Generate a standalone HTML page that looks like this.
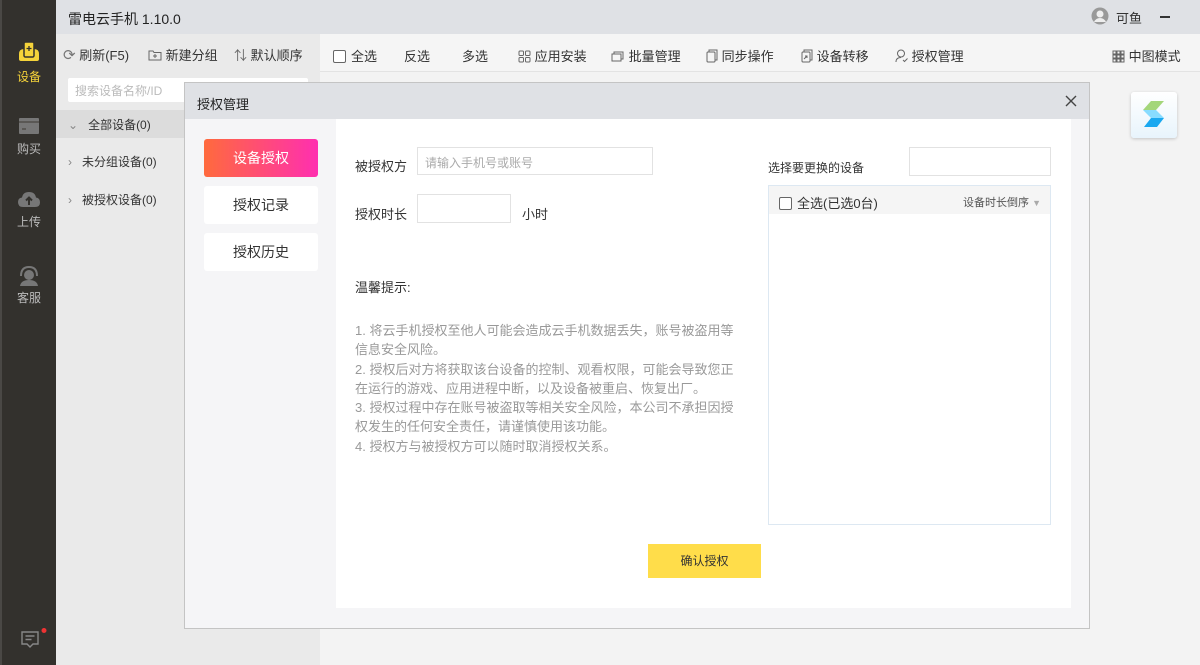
<!DOCTYPE html>
<html><head><meta charset="utf-8"><style>
*{margin:0;padding:0;box-sizing:border-box}
body{width:1200px;height:665px;overflow:hidden;position:relative;font-family:"Liberation Sans","Noto Sans CJK SC",sans-serif;background:#f3f3f3;color:#333}
.abs{position:absolute}
.side{left:0;top:0;width:56px;height:665px;background:#33312d;border-left:2px solid #4a4845}
.si{position:absolute;left:0;width:54px;text-align:center;font-size:12px;color:#bbb}
.title{left:56px;top:0;width:1144px;height:34px;background:#dfe1e5}
.lp{left:56px;top:34px;width:264px;height:631px;background:#eaeaea}
.tb{left:320px;top:34px;width:880px;height:38px;background:#f5f5f5;border-bottom:1px solid #e3e3e3}
.t{position:absolute;font-size:13px;white-space:nowrap}
.cb{display:inline-block;width:13px;height:13px;border:1px solid #666;background:#fff;border-radius:2px;vertical-align:-2px;margin-right:5px}
.modal{left:184px;top:82px;width:906px;height:547px;background:#f5f5f7;border:1px solid #c4c4c4}
.mh{left:0;top:0;width:904px;height:36px;background:#dfe1e5}
.nav{position:absolute;left:19px;width:114px;height:38px;border-radius:3px;background:#fff;text-align:center;line-height:38px;font-size:14px;color:#333}
.content{left:151px;top:36px;width:735px;height:489px;background:#fff}
.box{position:absolute;background:#fff;border:1px solid #e2e2e2}
</style></head><body>
<div class="abs side">
 <div class="si" style="top:40px;color:#f5d33a">
  <svg width="26" height="24" viewBox="0 0 26 24"><path d="M3 14 Q3 9 8 9 L18 9 Q23 9 23 14 L23 19 Q23 21 21 21 L5 21 Q3 21 3 19Z" fill="#f5d33a"/><rect x="8" y="2" width="10" height="15" rx="1.5" fill="#f5d33a" stroke="#33312d" stroke-width="1.5"/><path d="M13 6v5M10.5 8.5h5" stroke="#33312d" stroke-width="1.3"/></svg>
  <div style="margin-top:1px">设备</div></div>
 <div class="si" style="top:117px"><svg width="22" height="18" viewBox="0 0 22 18"><rect x="1" y="1" width="20" height="16" rx="1" fill="#777"/><rect x="1" y="4" width="20" height="2" fill="#5a5855"/><rect x="4" y="11" width="4" height="2" fill="#5a5855"/></svg><div style="margin-top:2px">购买</div></div>
 <div class="si" style="top:190px"><svg width="24" height="18" viewBox="0 0 24 18"><path d="M6 17 Q1 17 1 12 Q1 8 5 7.5 Q6 2 12 2 Q18 2 19 7.5 Q23 8 23 12.5 Q23 17 18 17Z" fill="#777"/><path d="M12 15V8M9 10.5l3-3 3 3" stroke="#33312d" stroke-width="2" fill="none"/></svg><div style="margin-top:2px">上传</div></div>
 <div class="si" style="top:264px"><svg width="24" height="22" viewBox="0 0 24 22"><path d="M4 12 Q4 3 12 3 Q20 3 20 12" stroke="#777" stroke-width="2" fill="none"/><circle cx="12" cy="11" r="5" fill="#777"/><path d="M3 22 Q4 16 12 16 Q20 16 21 22Z" fill="#777"/></svg><div>客服</div></div>
 <svg class="abs" style="left:18px;top:628px" width="30" height="26" viewBox="0 0 30 26"><path d="M2 4h16v12h-5l-3 3-3-3H2Z" stroke="#888" stroke-width="1.4" fill="none"/><path d="M5.5 8h9M5.5 11.5h6" stroke="#888" stroke-width="1.4"/><circle cx="24" cy="2.5" r="2.5" fill="#e33"/></svg>
</div>
<div class="abs title"><div class="t" style="left:12px;top:9px;font-size:14px;color:#222">雷电云手机 1.10.0</div>
 <svg class="abs" style="left:1035px;top:7px" width="18" height="18" viewBox="0 0 18 18"><circle cx="9" cy="9" r="8.5" fill="#999"/><circle cx="9" cy="7" r="3.5" fill="#eee"/><path d="M3 15 Q5 11 9 11 Q13 11 15 15" fill="#eee"/></svg>
 <div class="t" style="left:1060px;top:8px">可鱼</div>
 <div class="abs" style="left:1104px;top:16px;width:10px;height:1.5px;background:#333"></div>
</div>
<div class="abs lp">
 <div class="t" style="left:7px;top:11px"><span style="color:#777;font-size:15px">⟳</span>&nbsp;刷新(F5)</div>
 <div class="t" style="left:92px;top:11px"><svg width="14" height="12" viewBox="0 0 14 12" style="vertical-align:-1px"><path d="M1 2h4l1 1.5h7V11H1Z" stroke="#666" fill="none"/><path d="M7 5v4M5 7h4" stroke="#666"/></svg>&nbsp;新建分组</div>
 <div class="t" style="left:178px;top:11px"><span style="color:#666">⇅</span>&nbsp;默认顺序</div>
 <div class="abs" style="left:12px;top:44px;width:240px;height:24px;background:#fff;border-radius:2px"><div class="t" style="left:7px;top:4px;font-size:12px;color:#bbb">搜索设备名称/ID</div></div>
 <div class="abs" style="left:0;top:76px;width:264px;height:28px;background:#dcdcdc"></div>
 <div class="t" style="left:12px;top:82px;font-size:12px"><span style="color:#888">⌄</span>&nbsp;&nbsp; 全部设备(0)</div>
 <div class="t" style="left:12px;top:119px;font-size:12px"><span style="color:#888">›</span>&nbsp;&nbsp; 未分组设备(0)</div>
 <div class="t" style="left:12px;top:157px;font-size:12px"><span style="color:#888">›</span>&nbsp;&nbsp; 被授权设备(0)</div>
</div>
<div class="abs tb">
 <div class="t" style="left:13px;top:12px"><span class="cb"></span>全选</div>
 <div class="t" style="left:84px;top:12px">反选</div>
 <div class="t" style="left:142px;top:12px">多选</div>
 <div class="t" style="left:198px;top:12px"><svg width="13" height="13" viewBox="0 0 13 13" style="vertical-align:-2px"><g fill="none" stroke="#666"><rect x="1" y="1" width="4.5" height="4.5" rx="1"/><rect x="7.5" y="1" width="4.5" height="4.5" rx="1"/><rect x="1" y="7.5" width="4.5" height="4.5" rx="1"/><rect x="7.5" y="7.5" width="4.5" height="4.5" rx="1"/></g></svg> 应用安装</div>
 <div class="t" style="left:291px;top:12px"><svg width="14" height="12" viewBox="0 0 14 12" style="vertical-align:-1px"><g fill="none" stroke="#666"><rect x="1" y="4" width="9" height="7"/><path d="M3 4V2h9v7h-2"/></g></svg> 批量管理</div>
 <div class="t" style="left:386px;top:12px"><svg width="12" height="14" viewBox="0 0 12 14" style="vertical-align:-2px"><g fill="none" stroke="#666"><rect x="1" y="3" width="8" height="10" rx="1"/><path d="M3 3V1h8v10H9"/></g></svg> 同步操作</div>
 <div class="t" style="left:481px;top:12px"><svg width="12" height="14" viewBox="0 0 12 14" style="vertical-align:-2px"><g fill="none" stroke="#666"><rect x="1" y="3" width="8" height="10" rx="1"/><path d="M3 3V1h8v10H9M3 10l3-3M4 7h2v2"/></g></svg> 设备转移</div>
 <div class="t" style="left:575px;top:12px"><svg width="13" height="14" viewBox="0 0 13 14" style="vertical-align:-2px"><g fill="none" stroke="#666"><circle cx="6" cy="4.5" r="3.5"/><path d="M1 13 Q1 8.5 6 8.5M8 11l1.5 1.5 3-3"/></g></svg> 授权管理</div>
 <div class="t" style="left:792px;top:12px"><svg width="13" height="13" viewBox="0 0 13 13" style="vertical-align:-2px"><g fill="none" stroke="#666"><rect x="1" y="1" width="3" height="3"/><rect x="5" y="1" width="3" height="3"/><rect x="9" y="1" width="3" height="3"/><rect x="1" y="5" width="3" height="3"/><rect x="5" y="5" width="3" height="3"/><rect x="9" y="5" width="3" height="3"/><rect x="1" y="9" width="3" height="3"/><rect x="5" y="9" width="3" height="3"/><rect x="9" y="9" width="3" height="3"/></g></svg> 中图模式</div>
</div>
<div class="abs" style="left:1131px;top:92px;width:46px;height:46px;background:linear-gradient(#fff,#e8f4fc);border-radius:3px;box-shadow:0 1px 3px rgba(0,0,0,.2)">
 <svg width="46" height="46" viewBox="0 0 46 46"><path d="M12 18 L20 9 H33 L25 18Z" fill="#a3d67a"/><path d="M12 18 H25 L33 26 H20Z" fill="#88dcff"/><path d="M20 26 H33 L26 35 H13Z" fill="#1aa8f0"/></svg>
</div>
<div class="abs modal">
 <div class="abs mh"><div class="t" style="left:12px;top:11px;color:#222">授权管理</div>
  <svg class="abs" style="left:880px;top:12px" width="12" height="12" viewBox="0 0 12 12"><path d="M1 1l10 10M11 1L1 11" stroke="#444" stroke-width="1.4"/></svg></div>
 <div class="nav" style="top:56px;background:linear-gradient(90deg,#ff6a3d,#ff2fb0);color:#fff">设备授权</div>
 <div class="nav" style="top:103px">授权记录</div>
 <div class="nav" style="top:150px">授权历史</div>
 <div class="abs content">
  <div class="t" style="left:19px;top:37px">被授权方</div>
  <div class="box" style="left:81px;top:28px;width:236px;height:28px"><div class="t" style="left:7px;top:6px;font-size:12px;color:#aaa">请输入手机号或账号</div></div>
  <div class="t" style="left:19px;top:85px">授权时长</div>
  <div class="box" style="left:81px;top:75px;width:94px;height:29px"></div>
  <div class="t" style="left:186px;top:85px">小时</div>
  <div class="t" style="left:19px;top:158px;font-size:13px">温馨提示:</div>
  <div class="abs" style="left:19px;top:202px;width:389px;font-size:13px;line-height:19.3px;color:#999">1. 将云手机授权至他人可能会造成云手机数据丢失，账号被盗用等信息安全风险。<br>2. 授权后对方将获取该台设备的控制、观看权限，可能会导致您正在运行的游戏、应用进程中断，以及设备被重启、恢复出厂。<br>3. 授权过程中存在账号被盗取等相关安全风险，本公司不承担因授权发生的任何安全责任，请谨慎使用该功能。<br>4. 授权方与被授权方可以随时取消授权关系。</div>
  <div class="t" style="left:432px;top:40px;font-size:12px">选择要更换的设备</div>
  <div class="box" style="left:573px;top:28px;width:142px;height:29px"></div>
  <div class="abs" style="left:432px;top:66px;width:283px;height:340px;border:1px solid #dde8f2;background:#fff">
   <div class="abs" style="left:0;top:0;width:281px;height:28px;background:#f5f5f5"></div>
   <div class="t" style="left:10px;top:7px"><span class="cb"></span>全选(已选0台)</div>
   <div class="t" style="left:194px;top:8px;font-size:11px;color:#555">设备时长倒序 <span style="color:#aaa;font-size:9px">▼</span></div>
  </div>
  <div class="abs" style="left:312px;top:425px;width:113px;height:34px;background:#ffdd4a;text-align:center;line-height:34px;font-size:12px;color:#333">确认授权</div>
 </div>
</div>
</body></html>
